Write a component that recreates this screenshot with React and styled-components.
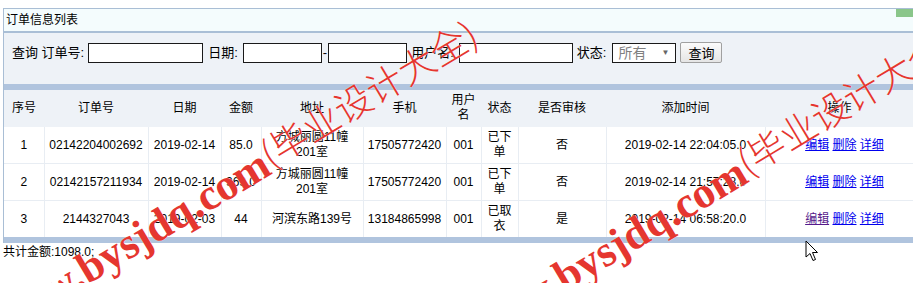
import React from 'react';
import styled, { createGlobalStyle } from 'styled-components';

const GlobalStyle = createGlobalStyle`
  html, body {
    margin: 0;
    padding: 0;
    background: #fff;
    overflow: hidden;
  }
  body {
    font-family: "Liberation Sans", "Noto Sans CJK SC", sans-serif;
    font-size: 12px;
    color: #000;
  }
`;

const Page = styled.div`
  position: relative;
  width: 913px;
  height: 283px;
  overflow: hidden;
  padding: 8px 0 0 3px;
  box-sizing: border-box;
`;

const Panel = styled.div`
  border-top: 1px solid #a9bed5;
  border-left: 1px solid #a9bed5;
`;

const TitleBar = styled.div`
  display: flex;
  justify-content: space-between;
  align-items: flex-start;
  height: 22px;
  background: #f4fcfd;
  border-bottom: 2px solid #aabfd6;
`;

const Title = styled.span`
  padding-left: 2px;
  line-height: 22px;
  font-size: 12px;
`;

const GreenMark = styled.span`
  width: 17px;
  height: 8px;
  background: #8ac68a;
`;

const SearchBar = styled.div`
  display: flex;
  align-items: flex-start;
  height: 51px;
  padding: 10px 0 0 8px;
  box-sizing: border-box;
  background: #eef2f7;
  font-size: 13px;
`;

const Label = styled.span`
  line-height: 20px;
  margin: ${p => p.$m || '0'};
`;

const TextInput = styled.input`
  width: ${p => p.$w}px;
  height: 20px;
  box-sizing: border-box;
  border: 1px solid #1a1a1a;
  padding: 0 2px;
  margin: 0;
  background: #fff;
  font-size: 12px;
`;

const SelectBox = styled.div`
  position: relative;
  width: 64px;
  height: 20px;
  box-sizing: border-box;
  border: 1px solid #1a1a1a;
  background: #fff;
  margin-right: 4px;
  color: #808080;
  font-size: 14px;
  line-height: 18px;
  padding-left: 5px;
`;

const Arrow = styled.span`
  position: absolute;
  right: 6px;
  top: 0;
  font-size: 8px;
  color: #666;
`;

const Button = styled.button`
  width: 42px;
  height: 21px;
  margin-top: -1px;
  box-sizing: border-box;
  border: 1px solid #a0a0a0;
  border-radius: 2px;
  background: linear-gradient(#fbfbfb, #e5e5e5);
  font-family: inherit;
  font-size: 13px;
  padding: 0;
  color: #000;
`;

const Band = styled.div`
  height: 6px;
  background: #b0c4de;
`;

const Table = styled.table`
  width: 910px;
  table-layout: fixed;
  border-collapse: collapse;
  font-size: 12px;
`;

const HeadCell = styled.th`
  height: 36px;
  padding: 0 3px;
  font-weight: normal;
  line-height: 15px;
  background: #eef2f7;
  border-bottom: 1px solid #eef2f7;
  text-align: center;
  vertical-align: middle;
`;

const Cell = styled.td`
  height: 36px;
  padding: ${p => p.$pad || '0 3px'};
  line-height: 15px;
  text-align: center;
  vertical-align: middle;
  background: #fff;
  border-right: 1px solid #e8edf3;
  border-bottom: 1px solid #e8edf3;
`;

const Row = styled.tr`
  &:last-child td {
    border-bottom: none;
  }
`;

const Link = styled.a`
  color: ${p => (p.$visited ? '#551a8b' : '#0000ee')};
  text-decoration: underline;
`;

const Total = styled.div`
  padding-top: 2px;
  line-height: 15px;
`;

const Watermark = styled.div`
  position: absolute;
  left: ${p => p.$x}px;
  top: ${p => p.$y}px;
  height: 44px;
  white-space: nowrap;
  transform-origin: 0 50%;
  transform: rotate(-31deg);
  color: #e5362f;
  line-height: 44px;
  text-shadow: 0 0 1px #fff;
  pointer-events: none;
`;

const WmLatin = styled.span`
  font-family: "Liberation Serif", serif;
  font-weight: bold;
  font-size: 44px;
`;

const WmCjk = styled.span`
  font-family: "Noto Sans CJK SC", sans-serif;
  font-weight: 300;
  font-size: 37px;
  vertical-align: 5px;
`;

const Cursor = styled.svg`
  position: absolute;
  left: 805px;
  top: 240px;
`;

const cols = [40, 104, 73, 40, 102, 83, 35, 37, 88, 159, 149];
const heads = ['序号', '订单号', '日期', '金额', '地址', '手机', '用户名', '状态', '是否审核', '添加时间', '操作'];

const orders = [
  { no: '02142204002692', date: '2019-02-14', amount: '85.0', addr: '方城丽圆11幢201室', phone: '17505772420', user: '001', status: '已下单', audit: '否', time: '2019-02-14 22:04:05.0' },
  { no: '02142157211934', date: '2019-02-14', amount: '969.0', addr: '方城丽圆11幢201室', phone: '17505772420', user: '001', status: '已下单', audit: '否', time: '2019-02-14 21:57:28.0' },
  { no: '2144327043', date: '2019-02-03', amount: '44', addr: '河滨东路139号', phone: '13184865998', user: '001', status: '已取衣', audit: '是', time: '2019-02-14 06:58:20.0', visited: true },
];

function Mark({ x, y }) {
  return (
    <Watermark $x={x} $y={y}>
      <WmLatin>www.bysjdq.com</WmLatin>
      <WmCjk>(毕业设计大全)</WmCjk>
    </Watermark>
  );
}

export default function App() {
  return (
    <>
      <GlobalStyle />
      <Page>
        <Panel>
          <TitleBar>
            <Title>订单信息列表</Title>
            <GreenMark />
          </TitleBar>
          <SearchBar>
            <Label $m="0 4px 0 0">查询 订单号:</Label>
            <TextInput $w={115} />
            <Label $m="0 5px 0 5px">日期:</Label>
            <TextInput $w={79} />
            <Label $m="0 1px">-</Label>
            <TextInput $w={79} />
            <Label $m="0 5px 0 4px">用户名:</Label>
            <TextInput $w={114} />
            <Label $m="0 6px 0 4px">状态:</Label>
            <SelectBox>
              所有
              <Arrow>▼</Arrow>
            </SelectBox>
            <Button>查询</Button>
          </SearchBar>
          <Band />
          <Table>
            <colgroup>
              {cols.map((w, i) => <col key={i} style={{ width: w }} />)}
            </colgroup>
            <thead>
              <tr>
                {heads.map(h => <HeadCell key={h}>{h}</HeadCell>)}
              </tr>
            </thead>
            <tbody>
              {orders.map((o, i) => (
                <Row key={o.no}>
                  <Cell>{i + 1}</Cell>
                  <Cell>{o.no}</Cell>
                  <Cell>{o.date}</Cell>
                  <Cell>{o.amount}</Cell>
                  <Cell $pad="0 8px">{o.addr}</Cell>
                  <Cell>{o.phone}</Cell>
                  <Cell>{o.user}</Cell>
                  <Cell>{o.status}</Cell>
                  <Cell>{o.audit}</Cell>
                  <Cell>{o.time}</Cell>
                  <Cell $pad="0 0 0 10px">
                    <Link href="#" $visited={o.visited}>编辑</Link> <Link href="#">删除</Link> <Link href="#">详细</Link>
                  </Cell>
                </Row>
              ))}
            </tbody>
          </Table>
          <Band />
        </Panel>
        <Total>共计金额:1098.0;</Total>
        <Mark x={-12} y={298} />
        <Mark x={465} y={306} />
        <Cursor width="14" height="22" viewBox="0 0 14 22">
          <path d="M1 1 L1 17 L5 13.5 L8 20.5 L10.5 19.5 L7.5 12.5 L12.5 12.5 Z" fill="#fff" stroke="#000" strokeWidth="1" strokeLinejoin="round" />
        </Cursor>
      </Page>
    </>
  );
}
